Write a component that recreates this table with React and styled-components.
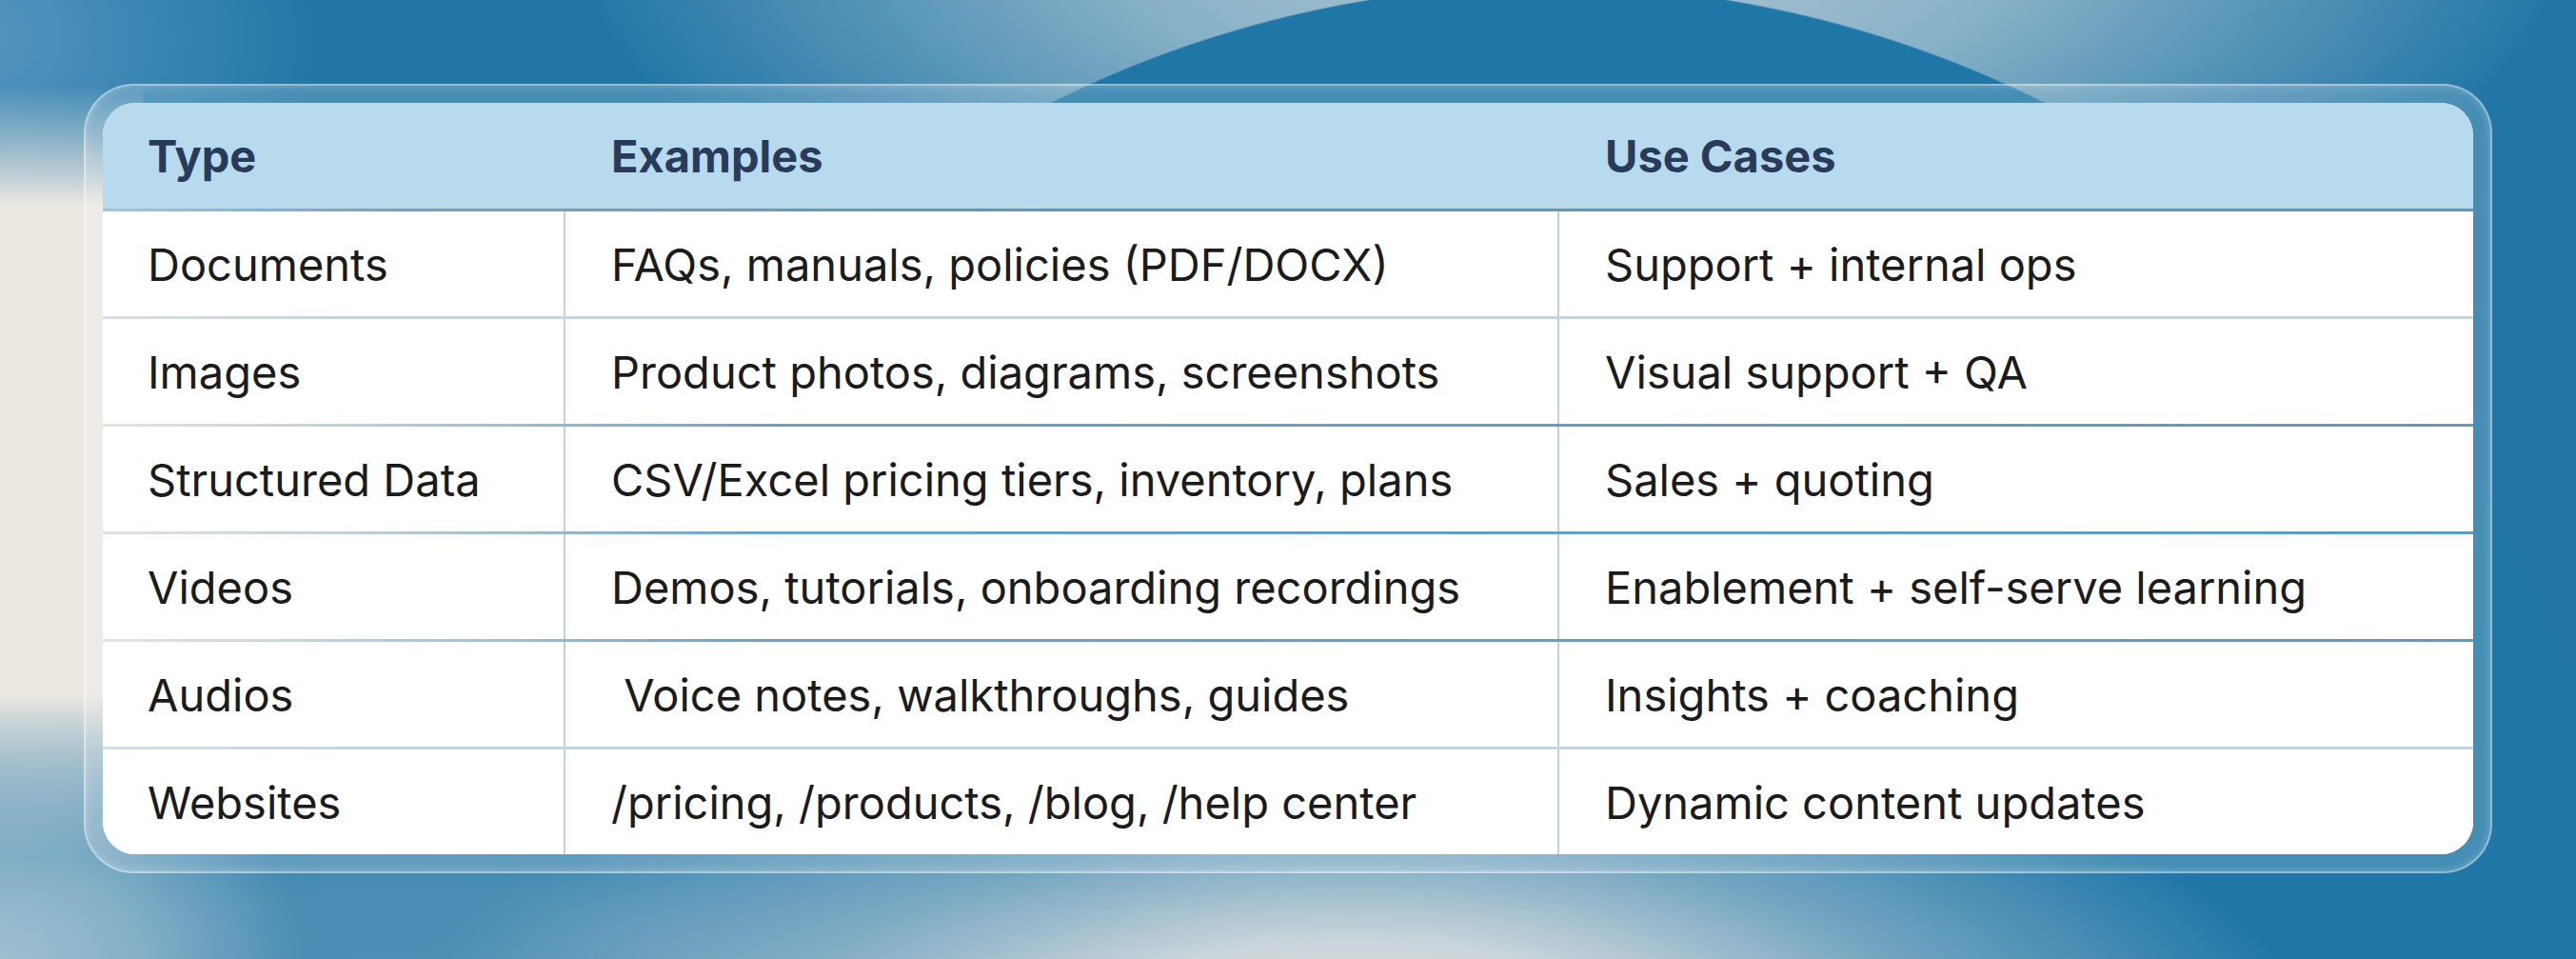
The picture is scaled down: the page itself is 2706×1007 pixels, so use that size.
import React from 'react'
import styled, { createGlobalStyle } from 'styled-components'

const rows = [
  { type: 'Documents', examples: 'FAQs, manuals, policies (PDF/DOCX)', uses: 'Support + internal ops', line: 'header' },
  { type: 'Images', examples: 'Product photos, diagrams, screenshots', uses: 'Visual support + QA', line: 'soft' },
  { type: 'Structured Data', examples: 'CSV/Excel pricing tiers, inventory, plans', uses: 'Sales + quoting', line: 'blue' },
  { type: 'Videos', examples: 'Demos, tutorials, onboarding recordings', uses: 'Enablement + self-serve learning', line: 'blue' },
  { type: 'Audios', examples: ' Voice notes, walkthroughs, guides', uses: 'Insights + coaching', line: 'blue' },
  { type: 'Websites', examples: '/pricing, /products, /blog, /help center', uses: 'Dynamic content updates', line: 'soft' },
]

const lines = {
  header: 'linear-gradient(90deg, #a3c5d8 0%, #6ea5c7 12%, #5b98bf 40%, #5b98bf 100%)',
  soft: 'linear-gradient(90deg, #d9dfe0 0%, #c2d6e1 10%, #c2d6e1 100%)',
  blue: 'linear-gradient(90deg, #e3e3df 0%, #bdd2dd 10%, #6aa2c5 28%, #5e9bc1 100%)',
}

const GlobalStyle = createGlobalStyle`
  html, body {
    margin: 0;
    padding: 0;
  }
  body {
    font-family: Inter, "Noto Sans", sans-serif;
    overflow: hidden;
  }
`

const Page = styled.div`
  width: 2706px;
  height: 1007px;
  box-sizing: border-box;
  padding: 88px 88px 0;
  background:
    radial-gradient(ellipse 1000px 330px at 1420px 1080px, rgba(212, 218, 221, 1) 0%, rgba(212, 218, 221, 0.95) 28%, rgba(200, 212, 218, 0.5) 60%, rgba(200, 212, 218, 0) 100%),
    linear-gradient(180deg, rgba(235, 231, 225, 0) 90px, #ebe7e1 215px, #ebe7e1 730px, rgba(235, 231, 225, 0) 900px) 0 0 / 150px 100% no-repeat,
    radial-gradient(ellipse 320px 260px at 0px 1010px, rgba(160, 192, 209, 1) 0%, rgba(160, 192, 209, 0.7) 45%, rgba(160, 192, 209, 0) 100%),
    radial-gradient(ellipse 760px 300px at 430px 1050px, rgba(77, 143, 181, 1) 0%, rgba(77, 143, 181, 0.9) 40%, rgba(77, 143, 181, 0) 100%),
    radial-gradient(circle 1169px at 1626px 1153px, #1f77a8 99.85%, rgba(31, 119, 168, 0) 100%),
    radial-gradient(ellipse 1050px 400px at 1650px -60px, #b3c9d4 0%, rgba(170, 197, 210, 0.75) 45%, rgba(170, 197, 210, 0) 100%),
    radial-gradient(ellipse 380px 260px at -40px 40px, rgba(100, 160, 198, 0.8) 0%, rgba(100, 160, 198, 0) 100%),
    #2176a6;
`

const Frame = styled.div`
  box-sizing: border-box;
  width: 2530px;
  padding: 18px;
  border-radius: 52px;
  border: 2px solid rgba(255, 255, 255, 0.42);
  background: rgba(255, 255, 255, 0.17);
  box-shadow: inset 0 0 10px rgba(255, 255, 255, 0.25);
`

const Table = styled.div`
  border-radius: 34px;
  overflow: hidden;
  background: #ffffff;
`

const Row = styled.div`
  display: grid;
  grid-template-columns: 484px 1044px 962px;
  height: ${p => (p.$head ? '111px' : '113px')};
  box-sizing: border-box;
  background: ${p => (p.$head ? '#b7dbec' : '#ffffff')};
  border-top: ${p => (p.$line ? '3px solid transparent' : '0')};
  border-image: ${p => (p.$line ? `${lines[p.$line]} 1` : 'none')};
`

const Cell = styled.div`
  display: flex;
  align-items: center;
  padding-left: ${p => (p.$first ? '47px' : '48px')};
  border-left: ${p => (p.$first ? '0' : p.$head ? '2px solid #c6d6de' : '2px solid #bcd3df')};
  white-space: pre;
  font-size: 47px;
  font-weight: ${p => (p.$head ? 700 : 400)};
  color: ${p => (p.$head ? '#2a3a5a' : '#1b1b1c')};
`

export default function App() {
  return (
    <Page>
      <GlobalStyle />
      <Frame>
        <Table>
          <Row $head>
            <Cell $head $first>Type</Cell>
            <Cell $head>Examples</Cell>
            <Cell $head>Use Cases</Cell>
          </Row>
          {rows.map(r => (
            <Row key={r.type} $line={r.line}>
              <Cell $first>{r.type}</Cell>
              <Cell>{r.examples}</Cell>
              <Cell>{r.uses}</Cell>
            </Row>
          ))}
        </Table>
      </Frame>
    </Page>
  )
}
